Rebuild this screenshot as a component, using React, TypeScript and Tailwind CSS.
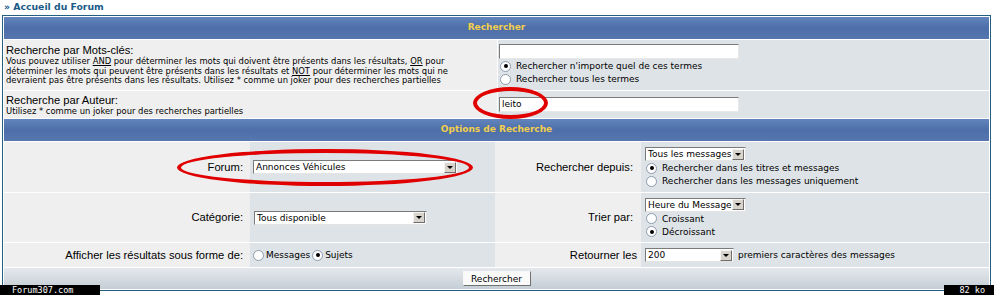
import React from 'react';

const Radio = ({ checked }: { checked?: boolean }) => (
  <span className="inline-flex h-[11px] w-[11px] shrink-0 items-center justify-center rounded-full border border-[#8d9bab] bg-white">
    {checked && <span className="h-[4px] w-[4px] rounded-full bg-black" />}
  </span>
);

const Arrow = () => (
  <span className="flex h-[11px] w-[12px] items-center justify-center border border-[#f4f4f4] border-r-[#6e6e6e] border-b-[#6e6e6e] bg-[#d8d4cc]">
    <span className="h-0 w-0 border-x-[3px] border-t-[3px] border-x-transparent border-t-black" />
  </span>
);

const Select = ({ value, className }: { value: string; className: string }) => (
  <div className={`flex h-[14px] items-center justify-between border border-[#7a7a7a] border-r-[#e4e4e4] border-b-[#e4e4e4] bg-white pl-[2px] pr-px ${className}`}>
    <span className="text-[9px] leading-[12px]">{value}</span>
    <Arrow />
  </div>
);

const TextBox = ({ value }: { value?: string }) => (
  <div className="flex h-[15px] w-[240px] items-center border border-[#7a7a7a] border-r-[#e8e8e8] border-b-[#e8e8e8] bg-white pl-[2px] text-[9px]">
    {value}
  </div>
);

const Header = ({ title }: { title: string }) => (
  <div className="flex h-[22px] items-center justify-center bg-gradient-to-b from-[#6385bd] via-[#4d6ea8] to-[#5676b0] text-[9px] font-bold text-[#f3cf4c]">
    {title}
  </div>
);

const label = "font-['Liberation_Sans',Arial,sans-serif] text-[11.2px] leading-[13px]";

export default function App() {
  return (
    <div className="relative h-[295px] w-[994px] overflow-hidden bg-white font-['DejaVu_Sans',Verdana,sans-serif] text-black">
      <div className="h-[15px] pl-[4px] pt-px text-[9.3px] font-bold leading-[11px] text-[#1a5a88]">» Accueil du Forum</div>

      <div className="ml-[2px] flex w-[989px] flex-col gap-px border border-[#245f80] bg-white p-px">
        <Header title="Rechercher" />

        {/* mots-clés */}
        <div className="grid h-[50px] grid-cols-[493px_1fr] gap-px">
          <div className="bg-[#efefef] pl-[2px] pt-[4px]">
            <div className={label}>Recherche par Mots-clés:</div>
            <div className="text-[8.4px] leading-[9.6px]">
              Vous pouvez utiliser <u>AND</u> pour déterminer les mots qui doivent être présents dans les résultats, <u>OR</u> pour
              <br />
              déterminer les mots qui peuvent être présents dans les résultats et <u>NOT</u> pour déterminer les mots qui ne
              <br />
              devraient pas être présents dans les résultats. Utilisez * comme un joker pour des recherches partielles
            </div>
          </div>
          <div className="flex flex-col gap-px bg-[#dee3e7] pl-[1px] pt-[4px] text-[9px] leading-[12px]">
            <TextBox />
            <div className="flex items-center gap-[5px] pl-px"><Radio checked />Rechercher n'importe quel de ces termes</div>
            <div className="flex items-center gap-[5px] pl-px"><Radio />Rechercher tous les termes</div>
          </div>
        </div>

        {/* auteur */}
        <div className="grid h-[27px] grid-cols-[493px_1fr] gap-px">
          <div className="bg-[#efefef] pl-[2px] pt-[3px]">
            <div className={label}>Recherche par Auteur:</div>
            <div className="text-[8.4px] leading-[9px]">Utilisez * comme un joker pour des recherches partielles</div>
          </div>
          <div className="flex items-center bg-[#dee3e7] pl-[1px]">
            <TextBox value="leito" />
          </div>
        </div>

        <Header title="Options de Recherche" />

        <div className="grid grid-cols-[246px_245px_146px_1fr] grid-rows-[50px_49px_24px] gap-y-px text-[9px] leading-[12px]">
          {/* forum */}
          <div className={`flex items-center justify-end bg-[#efefef] pr-[7px] ${label}`}>Forum:</div>
          <div className="flex items-center bg-[#dee3e7] pl-[3px]">
            <Select value="Annonces Véhicules" className="w-[205px]" />
          </div>
          <div className={`flex items-center justify-end bg-[#efefef] pr-[8px] ${label}`}>Rechercher depuis:</div>
          <div className="flex flex-col justify-center gap-[1px] bg-[#dee3e7] pl-[4px]">
            <Select value="Tous les messages" className="w-[101px]" />
            <div className="flex items-center gap-[5px] pl-px"><Radio checked />Rechercher dans les titres et messages</div>
            <div className="flex items-center gap-[5px] pl-px"><Radio />Rechercher dans les messages uniquement</div>
          </div>

          {/* categorie */}
          <div className={`flex items-center justify-end bg-[#efefef] pr-[7px] ${label}`}>Catégorie:</div>
          <div className="flex items-center bg-[#dee3e7] pl-[4px]">
            <Select value="Tous disponible" className="w-[173px]" />
          </div>
          <div className={`flex items-center justify-end bg-[#efefef] pr-[8px] ${label}`}>Trier par:</div>
          <div className="flex flex-col justify-center gap-[1px] bg-[#dee3e7] pl-[4px]">
            <Select value="Heure du Message" className="w-[101px]" />
            <div className="flex items-center gap-[5px] pl-px"><Radio />Croissant</div>
            <div className="flex items-center gap-[5px] pl-px"><Radio checked />Décroissant</div>
          </div>

          {/* affichage */}
          <div className={`flex items-center justify-end bg-[#efefef] pr-[7px] ${label}`}>Afficher les résultats sous forme de:</div>
          <div className="flex items-center gap-[2px] bg-[#dee3e7] pl-[3px]">
            <Radio />Messages<Radio checked />Sujets
          </div>
          <div className={`flex items-center justify-end bg-[#efefef] pr-[4px] ${label}`}>Retourner les</div>
          <div className="flex items-center gap-[4px] bg-[#dee3e7] pl-[4px]">
            <Select value="200" className="w-[89px]" />
            premiers caractères des messages
          </div>
        </div>

        <div className="flex h-[21px] items-center justify-center bg-gradient-to-b from-[#e4e8ec] to-[#c5ced6]">
          <button className="h-[15px] w-[68px] border border-[#f8f8f8] border-r-[#707070] border-b-[#707070] bg-[#fafafa] text-[9px] leading-[12px]">
            Rechercher
          </button>
        </div>
      </div>

      {/* annotations */}
      <div className="pointer-events-none absolute left-[177px] top-[149px] h-[37px] w-[296px] rounded-[50%] border-[4px] border-[#e10000]" />
      <div className="pointer-events-none absolute left-[473px] top-[87px] h-[32px] w-[75px] rounded-[50%] border-[4px] border-[#e10000]" />

      {/* host watermark */}
      <div className="absolute bottom-0 left-0 h-[10px] w-[100px] bg-black pl-[12px] font-['DejaVu_Sans_Mono',monospace] text-[8.5px] leading-[10px] text-white">Forum307.com</div>
      <div className="absolute bottom-0 right-0 h-[10px] w-[50px] bg-black pr-[9px] text-right font-['DejaVu_Sans_Mono',monospace] text-[8.5px] leading-[10px] text-white">82 ko</div>
    </div>
  );
}
